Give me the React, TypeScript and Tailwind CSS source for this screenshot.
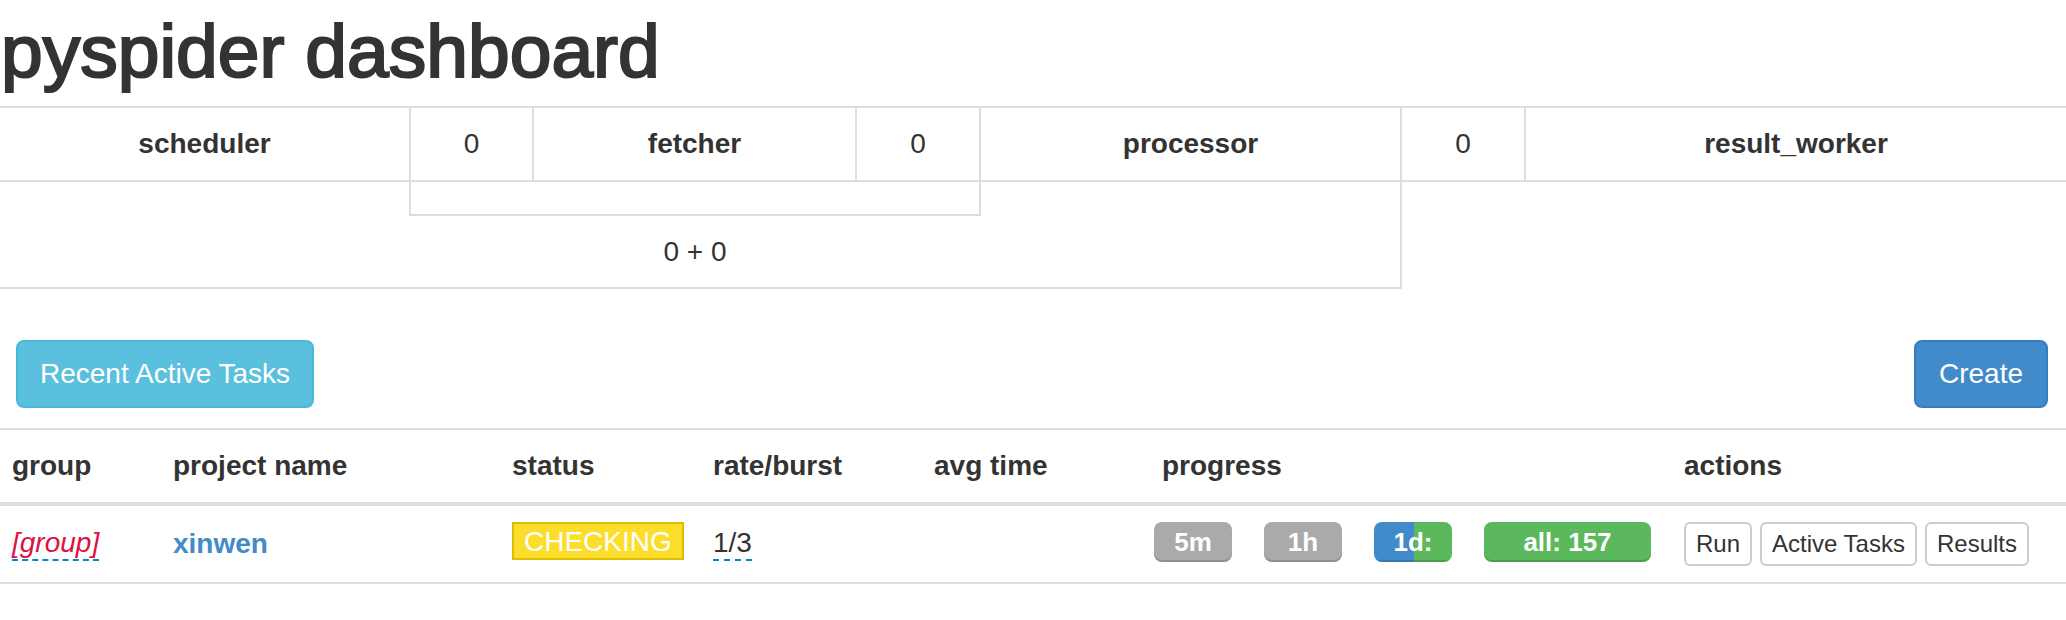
import React from "react";

function ProgressBox({ children, className }: { children: React.ReactNode; className: string }) {
  return (
    <div
      className={
        "relative h-[40px] rounded-[8px] overflow-hidden flex items-center justify-center text-white font-bold text-[26px] leading-[40px] shadow-[inset_0_-2px_0_rgba(0,0,0,0.15)] " +
        className
      }
    >
      {children}
    </div>
  );
}

function XsButton({ label }: { label: string }) {
  return (
    <button className="h-[44px] px-[10px] border-2 border-[#cccccc] rounded-[6px] bg-white text-[24px] leading-[36px] text-[#333]">
      {label}
    </button>
  );
}

export default function App() {
  const cell = "h-[72px] flex items-center justify-center";
  return (
    <div className="w-[2066px] min-h-[620px] bg-white text-[#333] font-['Liberation_Sans','Helvetica_Neue',Arial,sans-serif] overflow-hidden">
      <h1 className="pt-[10px] pl-[1px] text-[75px] leading-[82px] font-medium [-webkit-text-stroke:2.2px_#333] whitespace-nowrap">
        pyspider dashboard
      </h1>

      {/* queue info */}
      <div className="mt-[14px] text-[28px] leading-[40px]">
        <div className="grid grid-cols-[409px_123px_323px_124px_421px_124px_542px] border-y-2 border-[#dddddd]">
          <div className={cell + " font-bold"}>scheduler</div>
          <div className={cell + " border-l-2 border-[#dddddd]"}>0</div>
          <div className={cell + " border-l-2 border-[#dddddd] font-bold"}>fetcher</div>
          <div className={cell + " border-l-2 border-[#dddddd]"}>0</div>
          <div className={cell + " border-l-2 border-[#dddddd] font-bold"}>processor</div>
          <div className={cell + " border-l-2 border-[#dddddd]"}>0</div>
          <div className={cell + " border-l-2 border-[#dddddd] font-bold"}>result_worker</div>
        </div>
        <div className="w-[1402px] flex border-r-2 border-b-2 border-[#dddddd]">
          <div className="w-[409px]" />
          <div className="w-[572px] flex flex-col">
            <div className="h-[34px] border-x-2 border-b-2 border-[#dddddd]" />
            <div className="h-[71px] flex items-center justify-center">0 + 0</div>
          </div>
        </div>
      </div>

      {/* global buttons */}
      <div className="mt-[51px] flex justify-between pl-[16px] pr-[18px]">
        <button className="h-[68px] px-[22px] border-2 border-[#46b8da] bg-[#5bc0de] rounded-[8px] text-white text-[28px] leading-[40px]">
          Recent Active Tasks
        </button>
        <button className="h-[68px] px-[23px] border-2 border-[#357ebd] bg-[#428bca] rounded-[8px] text-white text-[28px] leading-[40px]">
          Create
        </button>
      </div>

      {/* projects table */}
      <div className="mt-[20px] text-[28px] leading-[40px]">
        <div className="grid grid-cols-[161px_339px_201px_221px_228px_522px_382px] pl-[12px] border-t-2 border-b-4 border-[#dddddd] font-bold">
          <div className="h-[72px] flex items-center">group</div>
          <div className="h-[72px] flex items-center">project name</div>
          <div className="h-[72px] flex items-center">status</div>
          <div className="h-[72px] flex items-center">rate/burst</div>
          <div className="h-[72px] flex items-center">avg time</div>
          <div className="h-[72px] flex items-center">progress</div>
          <div className="h-[72px] flex items-center">actions</div>
        </div>
        <div className="grid grid-cols-[161px_339px_201px_221px_228px_522px_382px] pl-[12px] border-b-2 border-[#dddddd]">
          <div className="h-[76px] flex items-center">
            <span className="italic text-[#dd1144] leading-[32px] border-b-2 border-dashed border-[#0088cc]">[group]</span>
          </div>
          <div className="h-[76px] flex items-center">
            <span className="font-bold text-[#428bca]">xinwen</span>
          </div>
          <div className="h-[76px] flex items-center">
            <span className="mb-[6px] h-[38px] px-[10px] pt-[2px] leading-[32px] bg-[#fddd2c] border-2 border-[#dcbe00] text-white">
              CHECKING
            </span>
          </div>
          <div className="h-[76px] flex items-center">
            <span className="leading-[32px] border-b-2 border-dashed border-[#0088cc]">1/3</span>
          </div>
          <div className="h-[76px]" />
          <div className="h-[76px] flex items-center">
            <div className="-ml-[8px] mb-[4px] flex gap-[32px]">
              <ProgressBox className="w-[78px] bg-[#aaaaaa]">5m</ProgressBox>
              <ProgressBox className="w-[78px] bg-[#aaaaaa]">1h</ProgressBox>
              <div className="relative w-[78px] h-[40px] rounded-[8px] overflow-hidden flex">
                <div className="w-[40px] bg-[#428bca] shadow-[inset_0_-2px_0_rgba(0,0,0,0.15)]" />
                <div className="flex-1 bg-[#5cb85c] shadow-[inset_0_-2px_0_rgba(0,0,0,0.15)]" />
                <span className="absolute inset-0 flex items-center justify-center text-white font-bold text-[26px] leading-[40px]">
                  1d:
                </span>
              </div>
              <ProgressBox className="w-[167px] bg-[#5cb85c]">all: 157</ProgressBox>
            </div>
          </div>
          <div className="h-[76px] flex items-center gap-[8px]">
            <XsButton label="Run" />
            <XsButton label="Active Tasks" />
            <XsButton label="Results" />
          </div>
        </div>
      </div>
    </div>
  );
}
